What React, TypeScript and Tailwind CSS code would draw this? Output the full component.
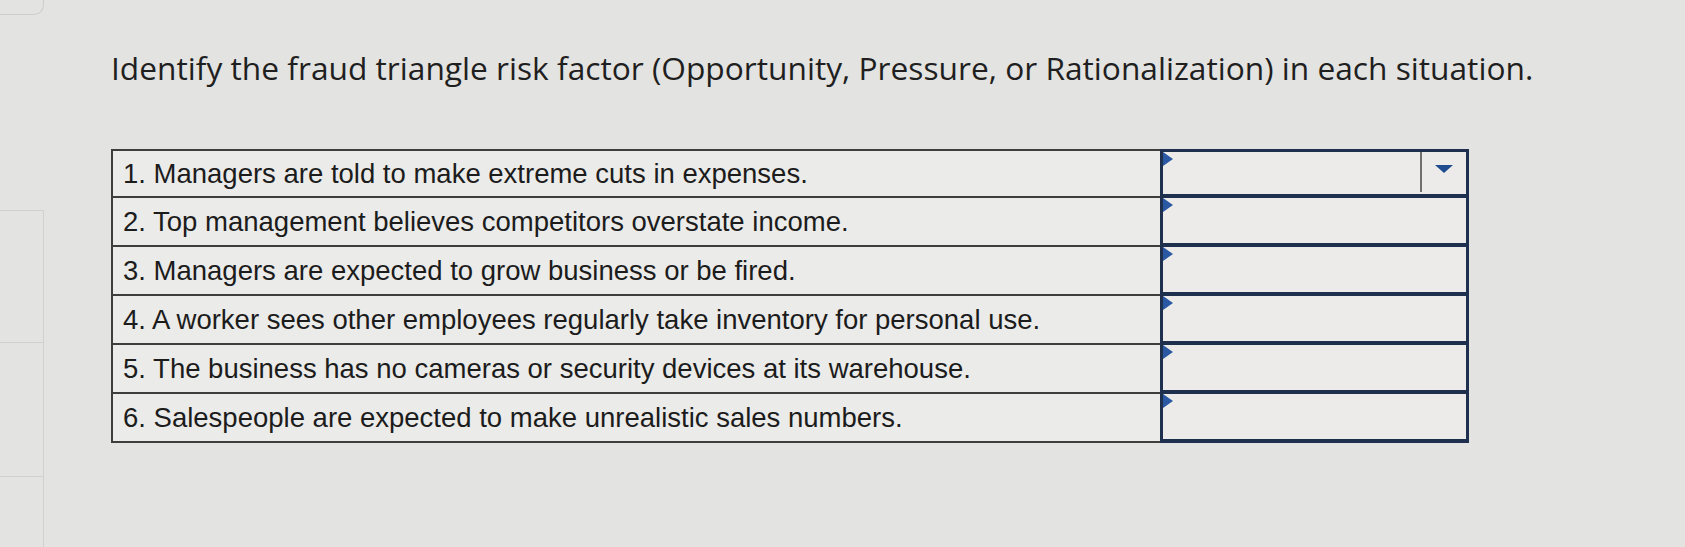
import React from "react";

const items = [
  "1. Managers are told to make extreme cuts in expenses.",
  "2. Top management believes competitors overstate income.",
  "3. Managers are expected to grow business or be fired.",
  "4. A worker sees other employees regularly take inventory for personal use.",
  "5. The business has no cameras or security devices at its warehouse.",
  "6. Salespeople are expected to make unrealistic sales numbers.",
];

const Flag = () => (
  <span className="absolute left-0 top-0 h-0 w-0 border-y-[7px] border-l-[10px] border-y-transparent border-l-[#2a58a3]" />
);

export default function App() {
  return (
    <div className="flex h-[547px] w-full overflow-hidden bg-[#e3e3e1]">
      {/* faint side panel from the page behind */}
      <aside className="flex w-[44px] shrink-0 flex-col">
        <div className="h-[15px] rounded-br-[10px] border-b border-r border-[#cdcdcb]" />
        <div className="mt-[195px] h-[133px] border-y border-r border-[#d0d0ce]" />
        <div className="h-[134px] border-b border-r border-[#d0d0ce]" />
        <div className="flex-1 border-r border-[#d0d0ce]" />
      </aside>

      <main className="flex flex-col pl-[67px] pt-[50px]">
        <h1 className="whitespace-nowrap font-['Open_Sans',sans-serif] text-[31.7px] leading-[36px] text-[#1f1f1f]">
          Identify the fraud triangle risk factor (Opportunity, Pressure, or Rationalization) in each situation.
        </h1>

        <div className="mt-[63px] flex w-[1358px] flex-col font-['Liberation_Sans',Arial,sans-serif]">
          {items.map((text, i) => (
            <div key={i} className="flex h-[49px]">
              <div
                className={`flex flex-1 items-center border-b-2 border-l-2 border-[#3e3e3e] bg-[#ebebe9] pl-[10px] text-[27.5px] leading-none text-[#1c1c1c] ${
                  i === 0 ? "border-t-2" : ""
                }`}
              >
                {text}
              </div>
              <div
                className={`relative flex w-[309px] items-center justify-end border-x-[3px] border-b-[4px] border-[#1f2f4e] bg-[#ecebea] ${
                  i === 0 ? "border-t-[3px]" : ""
                }`}
              >
                <Flag />
                {i === 0 && (
                  <>
                    <span className="mb-[4px] h-[40px] w-[2px] self-start bg-[#6f6f6f]" />
                    <span className="mx-[13px] mb-[8px] h-0 w-0 border-x-[9px] border-t-[8px] border-x-transparent border-t-[#1f4c8f]" />
                  </>
                )}
              </div>
            </div>
          ))}
        </div>
      </main>
    </div>
  );
}
